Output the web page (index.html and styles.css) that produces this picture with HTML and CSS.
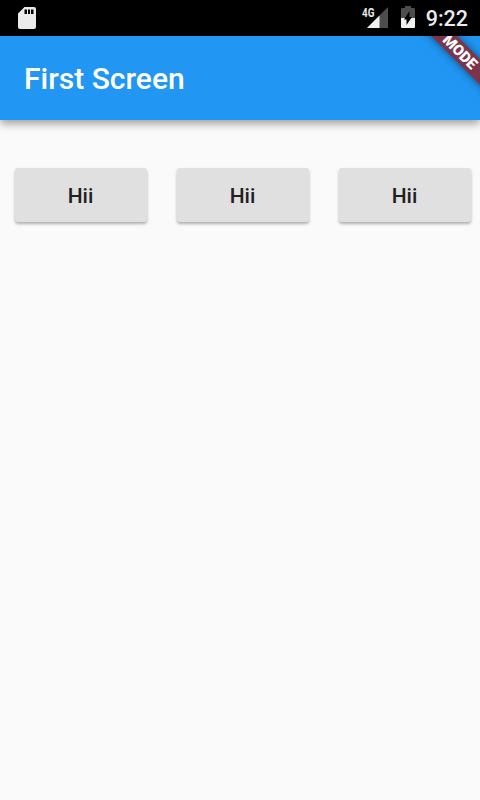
FILE: index.html
```html
<!DOCTYPE html>
<html lang="en">
<head>
<meta charset="utf-8">
<title>First Screen</title>
<link rel="stylesheet" href="styles.css">
</head>
<body>
<div class="status">
  <svg class="sd" width="18" height="22" viewBox="0 0 18 22"><path fill="#ebebeb" fill-rule="evenodd" d="M6.500 0H16Q18 0 18 2V20Q18 22 16 22H2Q0 22 0 20V6.500ZM6.500 2.500V7H9V2.500ZM10 2.500V7H12V2.500ZM13 2.500V7H15.500V2.500Z"/></svg>
  <span class="net">4G</span>
  <svg class="signal" width="21" height="21" viewBox="0 0 21 21"><path fill="#4d4d4d" d="M21 0V21H0Z"/><path fill="#f0f0f0" d="M12.500 8.500V21H0Z"/></svg>
  <svg class="battery" width="14" height="22" viewBox="0 0 14 22"><path fill="#4d4d4d" d="M4 0H10V2H13Q14 2 14 3V12H0V3Q0 2 1 2H4Z"/><path fill="#f0f0f0" d="M0 12H14V21Q14 22 13 22H1Q0 22 0 21Z"/><path d="M8.500 5V11H11L5.500 19V13.500H3Z"/></svg>
  <span class="time">9:22</span>
</div>
<header class="appbar"><h1>First Screen</h1><div class="banner-clip"><div class="banner">MODE</div></div></header>
<main class="row"><button>Hii</button><button>Hii</button><button>Hii</button></main>
</body>
</html>
```
FILE: styles.css
```css
* { box-sizing: border-box; }
body { margin: 0; width: 480px; height: 800px; overflow: hidden; background: #fafafa; font-family: Roboto, sans-serif; }
.status { display: flex; height: 36px; background: #000; color: #ebebeb; padding: 7px 12px 0 18px; }
.net { margin-left: 326px; width: 5px; font-size: 12px; line-height: 12px; font-weight: 700; white-space: nowrap; transform: scaleX(.82); transform-origin: left; }
.signal { flex: none; }
.battery { margin: -1px 0 0 13px; flex: none; }
.sd { flex: none; }
.time { margin-left: auto; font-size: 21.5px; line-height: 24px; font-weight: 500; }
.appbar { position: relative; height: 84px; background: #2196f3; color: #fff; padding: 2px 24px 0; display: flex; align-items: center; box-shadow: 0 4px 8px rgba(0,0,0,.35); }
h1 { margin: 0; font-size: 30px; font-weight: 500; line-height: 36px; }
.banner-clip { position: absolute; right: 0; top: 0; width: 80px; height: 84px; overflow: hidden; }
.banner { position: absolute; left: -.5px; top: 6.5px; width: 120px; height: 18px; transform: rotate(45deg); background: #7d344b; color: #fff; font-size: 15px; font-weight: 900; line-height: 18px; text-align: center; box-shadow: 0 0 9px rgba(0,0,0,.5); }
.row { display: flex; gap: 30px; padding: 48px 0 0 15px; }
button { flex: none; width: 132px; height: 54px; border: 0; border-radius: 3px; background: #e0e0e0; color: #212121; font: 500 21px/52px Roboto, sans-serif; padding: 2px 1px 0 0; box-shadow: 0 2px 3px rgba(0,0,0,.3); }
```
